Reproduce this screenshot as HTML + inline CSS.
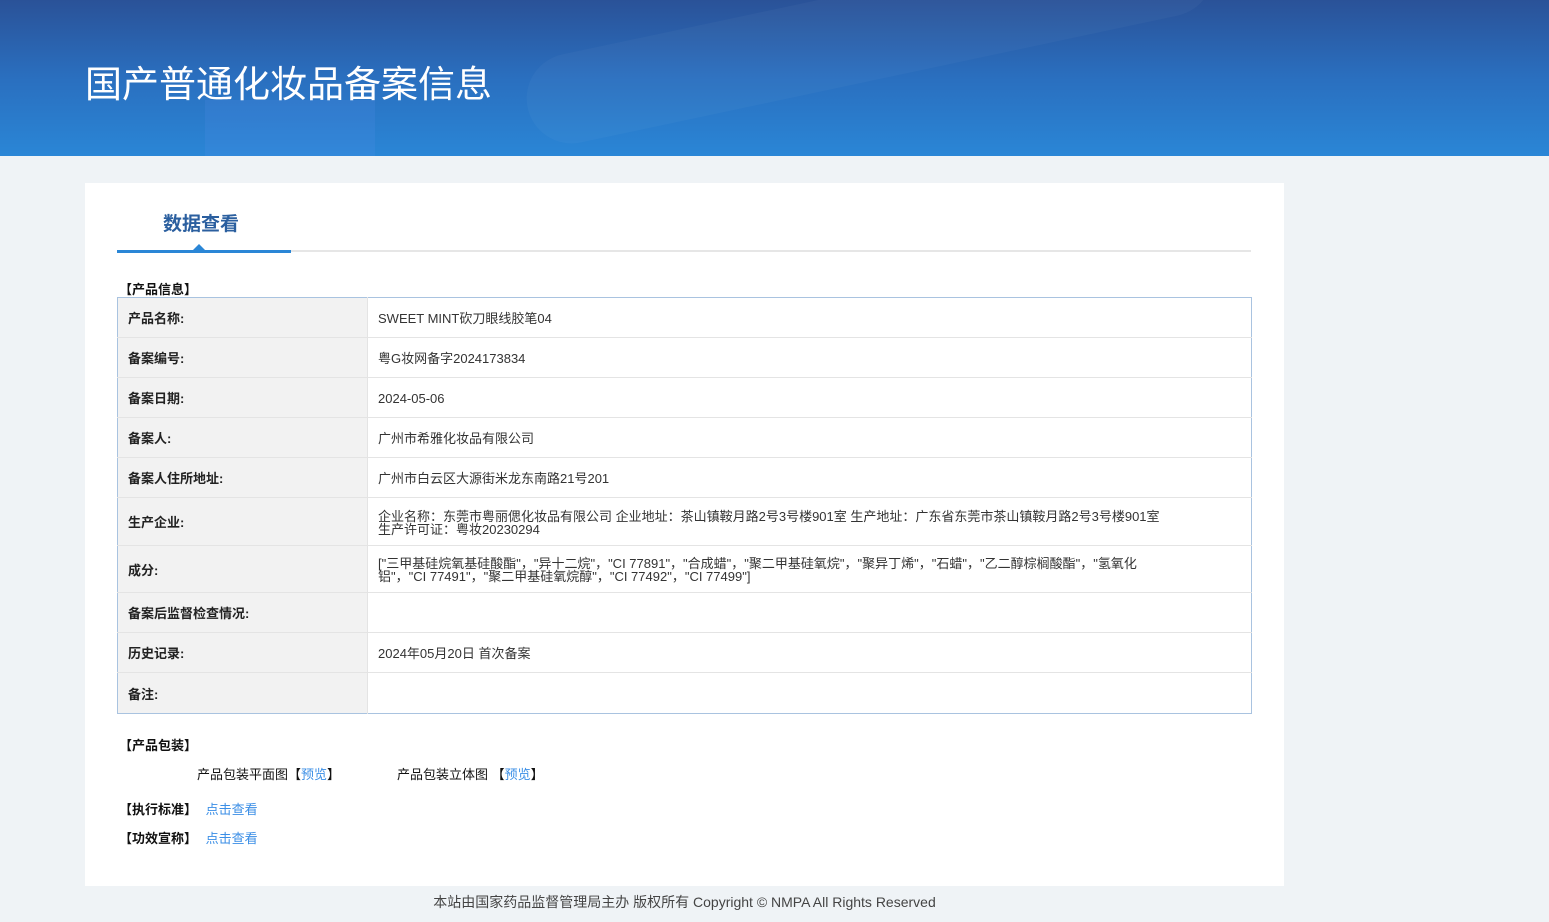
<!DOCTYPE html>
<html><head><meta charset="utf-8"><style>
*{margin:0;padding:0;box-sizing:border-box}
body{width:1549px;height:922px;background:#eff3f6;font-family:"Liberation Sans","Noto Sans CJK SC",sans-serif;position:relative;overflow:hidden;color:#333}
.hd{position:absolute;left:0;top:0;width:1549px;height:156px;background:linear-gradient(180deg,#2a5298 0%,#2a6fbf 50%,#2a86d6 100%);overflow:hidden}
.hd .b1{position:absolute;left:520px;top:-10px;width:700px;height:90px;border-radius:45px;background:rgba(255,255,255,0.03);transform:rotate(-12deg)}
.hd .b2{position:absolute;left:205px;top:100px;width:170px;height:60px;background:rgba(100,150,240,0.15)}
.hd h1{position:absolute;left:85px;top:54px;font-size:37px;font-weight:normal;color:#fff;letter-spacing:0px}
.card{position:absolute;left:85px;top:183px;width:1199px;height:703px;background:#fff}
.tab{position:absolute;left:78px;top:26px;font-size:19px;font-weight:bold;color:#2b5f9f}
.line{position:absolute;left:117px;top:250px;width:1134px;height:2px;background:#e6e6e6}
.tabl{position:absolute;left:117px;top:250px;width:174px;height:3px;background:#2a86d6}
.tri{position:absolute;left:193px;top:244px;width:0;height:0;border-left:6px solid transparent;border-right:6px solid transparent;border-bottom:6px solid #2a86d6}
.sec{position:absolute;font-size:13px;font-weight:bold;color:#111}
table{position:absolute;left:117px;top:297px;width:1135px;border-collapse:collapse;border:1px solid #a9c3e0;font-size:13px}
td{border-bottom:1px solid #e4e4e4;height:40px;padding:2px 10px 0;line-height:13px}
td.l{width:250px;background:#f2f2f2;font-weight:bold;color:#222;border-right:1px solid #e4e4e4}
td.v{color:#333}
.a{color:#3a8ee6}
.t{position:absolute;font-size:13px;color:#111}
.ft{position:absolute;left:0;width:1369px;text-align:center;top:892px;font-size:14px;color:#444}
</style></head><body>
<div class="hd"><div class="b1"></div><div class="b2"></div><h1>国产普通化妆品备案信息</h1></div>
<div class="card"><div class="tab">数据查看</div></div>
<div class="line"></div><div class="tabl"></div><div class="tri"></div>
<div class="sec" style="left:119px;top:279px">【产品信息】</div>
<table>
<tr><td class="l">产品名称:</td><td class="v">SWEET MINT砍刀眼线胶笔04</td></tr>
<tr><td class="l">备案编号:</td><td class="v">粤G妆网备字2024173834</td></tr>
<tr><td class="l">备案日期:</td><td class="v">2024-05-06</td></tr>
<tr><td class="l">备案人:</td><td class="v">广州市希雅化妆品有限公司</td></tr>
<tr><td class="l">备案人住所地址:</td><td class="v">广州市白云区大源街米龙东南路21号201</td></tr>
<tr><td class="l" style="height:48px">生产企业:</td><td class="v">企业名称：东莞市粤丽偲化妆品有限公司 企业地址：茶山镇鞍月路2号3号楼901室 生产地址：广东省东莞市茶山镇鞍月路2号3号楼901室<br>生产许可证：粤妆20230294</td></tr>
<tr><td class="l" style="height:47px">成分:</td><td class="v">["三甲基硅烷氧基硅酸酯"，"异十二烷"，"CI 77891"，"合成蜡"，"聚二甲基硅氧烷"，"聚异丁烯"，"石蜡"，"乙二醇棕榈酸酯"，"氢氧化<br>铝"，"CI 77491"，"聚二甲基硅氧烷醇"，"CI 77492"，"CI 77499"]</td></tr>
<tr><td class="l">备案后监督检查情况:</td><td class="v"></td></tr>
<tr><td class="l">历史记录:</td><td class="v">2024年05月20日 首次备案</td></tr>
<tr><td class="l" style="border-bottom:none;height:41px">备注:</td><td class="v" style="border-bottom:none"></td></tr>
</table>
<div class="sec" style="left:119px;top:735px">【产品包装】</div>
<div class="t" style="left:197px;top:764px">产品包装平面图【<span class="a">预览</span>】</div>
<div class="t" style="left:397px;top:764px">产品包装立体图 【<span class="a">预览</span>】</div>
<div class="sec" style="left:119px;top:799px">【执行标准】 <span class="a" style="font-weight:normal;margin-left:5px">点击查看</span></div>
<div class="sec" style="left:119px;top:828px">【功效宣称】 <span class="a" style="font-weight:normal;margin-left:5px">点击查看</span></div>
<div class="ft">本站由国家药品监督管理局主办 版权所有 Copyright © NMPA All Rights Reserved</div>
</body></html>
